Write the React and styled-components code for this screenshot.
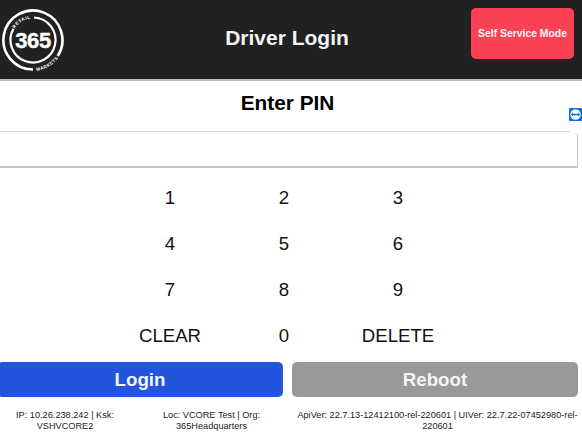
import * as React from "react";
import styled, { createGlobalStyle } from "styled-components";

const keys = ["1", "2", "3", "4", "5", "6", "7", "8", "9", "CLEAR", "0", "DELETE"];

const Logo = () =>
  <LogoSvg viewBox="0 0 64 64">
    <defs>
      <path id="logo-top" d="M 10.5 32 A 21.5 21.5 0 0 1 53.5 32" />
      <path id="logo-bottom" d="M 1 32 A 31 31 0 0 0 63 32" />
    </defs>
    <path d="M 32 61.5 A 29.5 29.5 0 1 1 56.7 48" fill="none" stroke="#fff" strokeWidth="2.6" />
    <path d="M 33 9.5 A 22.5 22.5 0 1 1 12.5 20.75" fill="none" stroke="#fff" strokeWidth="2.2" />
    <LogoSmall>
      <textPath href="#logo-top" startOffset="32%" textAnchor="middle">RETAIL</textPath>
    </LogoSmall>
    <LogoSmall>
      <textPath href="#logo-bottom" startOffset="67%" textAnchor="middle">MARKETS</textPath>
    </LogoSmall>
    <LogoNumber x="32" y="40" textAnchor="middle">365</LogoNumber>
  </LogoSvg>;

const TeamViewerTab = () =>
  <Tab>
    <svg width="13" height="13" viewBox="0 0 13 13">
      <rect width="13" height="13" rx="1" fill="#0e6fd6" />
      <circle cx="6.5" cy="6.5" r="5.2" fill="#fff" />
      <path d="M 1.8 6.5 L 4 4.6 V 5.7 H 9 V 4.6 L 11.2 6.5 L 9 8.4 V 7.3 H 4 V 8.4 Z" fill="#0e6fd6" />
    </svg>
  </Tab>;

export default function App() {
  return (
    <Page>
      <GlobalStyle />
      <Header>
        <Logo />
        <Title>Driver Login</Title>
        <ModeButton>Self Service Mode</ModeButton>
      </Header>
      <Heading>Enter PIN</Heading>
      <PinInput type="text" />
      <Keypad>
        {keys.map(k => <Key key={k}>{k}</Key>)}
      </Keypad>
      <Actions>
        <ActionButton $color="#2255dd">Login</ActionButton>
        <ActionButton $color="#999999">Reboot</ActionButton>
      </Actions>
      <Footer>
        <FooterCell>IP: 10.26.238.242 | Ksk: VSHVCORE2</FooterCell>
        <FooterCell>Loc: VCORE Test | Org: 365Headquarters</FooterCell>
        <FooterCell>ApiVer: 22.7.13-12412100-rel-220601 | UIVer: 22.7.22-07452980-rel-220601</FooterCell>
      </Footer>
      <TeamViewerTab />
    </Page>
  );
}

const GlobalStyle = createGlobalStyle`
  html, body {
    margin: 0;
    background: #fff;
    overflow: hidden;
  }
  * {
    box-sizing: border-box;
  }
`;

const Page = styled.div`
  position: relative;
  width: 582px;
  height: 434px;
  overflow: hidden;
  font-family: "Liberation Sans", Arial, sans-serif;
  color: #000;
`;

const Header = styled.div`
  display: flex;
  align-items: center;
  height: 81px;
  padding: 0 8px 0 1px;
  background: #212121;
  border-bottom: 2px solid #bdbdbd;
`;

const LogoSvg = styled.svg`
  width: 64px;
  height: 64px;
  flex: none;
  overflow: visible;
`;

const LogoSmall = styled.text`
  font-family: "Liberation Sans", Arial, sans-serif;
  font-size: 4.6px;
  font-weight: 700;
  letter-spacing: 0.5px;
  fill: #fff;
`;

const LogoNumber = styled.text`
  font-family: "Liberation Sans", Arial, sans-serif;
  font-size: 22px;
  font-weight: 700;
  letter-spacing: -0.4px;
  fill: #fff;
  stroke: #fff;
  stroke-width: 0.4px;
`;

const Title = styled.div`
  flex: 1;
  padding-left: 38px;
  margin-top: -3px;
  text-align: center;
  font-size: 21px;
  font-weight: 700;
  color: #f4f4f4;
`;

const ModeButton = styled.button`
  width: 103px;
  height: 51px;
  margin-top: -13px;
  padding: 0;
  border: none;
  border-radius: 5px;
  background: #fb4154;
  color: #f6f6f6;
  font-family: inherit;
  font-size: 10.4px;
  font-weight: 700;
  white-space: nowrap;
`;

const Heading = styled.div`
  height: 50px;
  padding: 10px 7px 0 0;
  text-align: center;
  font-size: 20.8px;
  line-height: 24px;
  font-weight: 700;
`;

const PinInput = styled.input`
  display: block;
  width: 585px;
  height: 37px;
  margin-left: -7px;
  background: #fff;
  border: 1px solid #d8d8d8;
  border-right-color: #c4c4c4;
  border-bottom: 2px solid #c4c4c4;
`;

const Keypad = styled.div`
  display: grid;
  grid-template-columns: repeat(3, 114px);
  grid-auto-rows: 46px;
  justify-content: center;
  margin-top: 7px;
  padding-right: 14px;
`;

const Key = styled.div`
  display: flex;
  align-items: center;
  justify-content: center;
  font-size: 18.6px;
  color: #111;
`;

const Actions = styled.div`
  display: grid;
  grid-template-columns: 286px 286px;
  gap: 9px;
  margin: 3px 0 0 -3px;
`;

const ActionButton = styled.button`
  height: 35px;
  padding: 0;
  border: none;
  border-radius: 5px;
  background: ${p => p.$color};
  color: #f4f4f4;
  font-family: inherit;
  font-size: 18.7px;
  font-weight: 700;
`;

const Footer = styled.div`
  display: grid;
  grid-template-columns: 130px 163px 289px;
  margin-top: 13px;
`;

const FooterCell = styled.div`
  text-align: center;
  font-size: 9.2px;
  line-height: 10.5px;
  color: #222;
`;

const Tab = styled.div`
  position: absolute;
  top: 107px;
  left: 569px;
  width: 16px;
  height: 27px;
  background: #fff;
  border-radius: 0 0 0 5px;
  box-shadow: 0 0 1px #d5dde8;
`;
